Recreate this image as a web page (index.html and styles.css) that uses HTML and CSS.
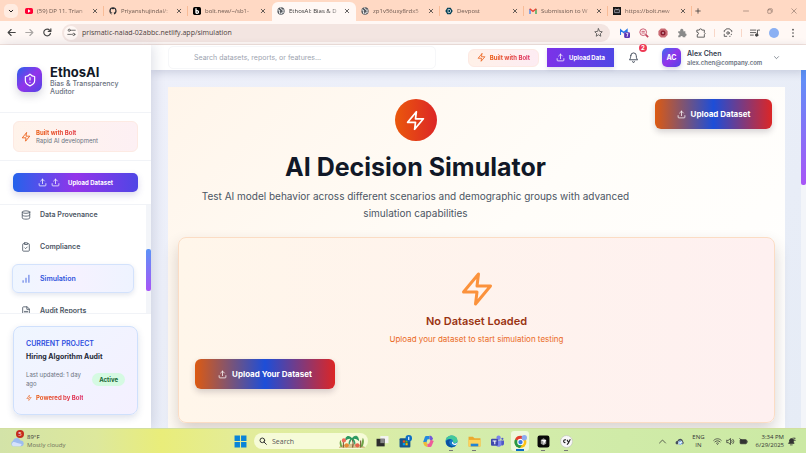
FILE: index.html
```
<!DOCTYPE html>
<html lang="en">

<head>
	<meta charset="UTF-8">
	<meta name="viewport" content="width=device-width, initial-scale=1">
	<title>EthosAI: Bias &amp; Transparency Auditor</title>
	<link rel="stylesheet" href="styles.css">
</head>

<body>
	<!-- shared icons -->
	<svg class="sprite" aria-hidden="true">
		<symbol id="zap" viewBox="0 0 24 24"><path d="M13 2 3 14h9l-1 8 10-12h-9l1-8z"/></symbol>
		<symbol id="upload" viewBox="0 0 24 24"><path d="M21 15v4a2 2 0 0 1-2 2H5a2 2 0 0 1-2-2v-4M17 8l-5-5-5 5M12 3v12"/></symbol>
		<symbol id="close" viewBox="0 0 24 24"><path d="M5 5l14 14M19 5 5 19"/></symbol>
		<symbol id="down" viewBox="0 0 24 24"><path d="m5 9 7 7 7-7"/></symbol>
		<symbol id="globe" viewBox="0 0 24 24"><circle cx="12" cy="12" r="11" fill="#555a60" stroke="none"/><path d="M3 9c5-1 6 2 4 5l2 6M10 3c0 4 5 2 5 5s5 2 6 1M14 20c-1-4 2-6 6-5" stroke="#fff" stroke-width="3"/></symbol>
	</svg>

	<header class="browser">
		<div class="tab-strip">
			<button class="tab-search" aria-label="Search tabs"><svg class="icon"><use href="#down"/></svg></button>
			<div class="tab">
				<svg class="favicon" viewBox="0 0 24 24"><rect y="3" width="24" height="18" rx="5" fill="#f03"/><path d="m9 7 8 5-8 5z" fill="#fff"/></svg>
				<span class="tab-name">(59) DP 11. Trian</span>
				<button class="tab-close" aria-label="Close tab"><svg class="icon"><use href="#close"/></svg></button>
			</div>
			<div class="tab">
				<svg class="favicon" viewBox="0 0 24 24"><path fill="#24292f" d="M12 1a11 11 0 0 0-3.5 21.4c.6.1.8-.2.8-.5v-2c-3 .7-3.7-1.3-3.7-1.3-.5-1.300-1.200-1.600-1.200-1.600-1-.7.1-.7.1-.7 1.100.1 1.700 1.100 1.700 1.100 1 1.700 2.600 1.200 3.200.9.1-.7.4-1.200.7-1.500-2.500-.3-5-1.200-5-5.500 0-1.200.4-2.200 1.100-2.900-.1-.3-.5-1.400.1-2.900 0 0 .9-.3 3 1.100a10 10 0 0 1 5.500 0c2.100-1.400 3-1.100 3-1.100.6 1.500.2 2.600.1 2.900.7.7 1.100 1.700 1.100 2.900 0 4.300-2.500 5.200-5 5.500.4.3.8 1 .8 2v3c0 .3.2.6.8.5A11 11 0 0 0 12 1z"/></svg>
				<span class="tab-name">Priyanshujindal/:</span>
				<button class="tab-close" aria-label="Close tab"><svg class="icon"><use href="#close"/></svg></button>
			</div>
			<div class="tab">
				<svg class="favicon" viewBox="0 0 24 24"><rect width="24" height="24" rx="5" fill="#000"/><path d="M9 4v15M9 13a4 4 0 1 1 0 4" fill="none" stroke="#fff" stroke-width="4"/></svg>
				<span class="tab-name">bolt.new/~/sb1-</span>
				<button class="tab-close" aria-label="Close tab"><svg class="icon"><use href="#close"/></svg></button>
			</div>
			<div class="tab tab-active">
				<svg class="favicon icon"><use href="#globe"/></svg>
				<span class="tab-name">EthosAI: Bias &amp; D</span>
				<button class="tab-close" aria-label="Close tab"><svg class="icon"><use href="#close"/></svg></button>
			</div>
			<div class="tab">
				<svg class="favicon icon"><use href="#globe"/></svg>
				<span class="tab-name">zp1v56uxy8rdx5</span>
				<button class="tab-close" aria-label="Close tab"><svg class="icon"><use href="#close"/></svg></button>
			</div>
			<div class="tab">
				<svg class="favicon" viewBox="0 0 24 24"><path d="M7 2h10l6 10-6 10H7L1 12z" fill="#003e54"/><path d="M9 7h3a5 5 0 0 1 0 10H9z" fill="none" stroke="#fff" stroke-width="2"/></svg>
				<span class="tab-name">Devpost</span>
				<button class="tab-close" aria-label="Close tab"><svg class="icon"><use href="#close"/></svg></button>
			</div>
			<div class="tab">
				<svg class="favicon" viewBox="0 0 24 24" fill="none" stroke-width="4"><path d="M3 21V6" stroke="#4285f4"/><path d="M21 21V6" stroke="#34a853"/><path d="m2 5 10 8 10-8" stroke="#ea4335"/></svg>
				<span class="tab-name">Submission to W</span>
				<button class="tab-close" aria-label="Close tab"><svg class="icon"><use href="#close"/></svg></button>
			</div>
			<div class="tab">
				<svg class="favicon" viewBox="0 0 24 24"><rect width="24" height="24" fill="#161616"/><path d="M5 8h14v9H5zM8 5l3 3M16 5l-3 3M9 12h1M14 12h1" fill="none" stroke="#ccd" stroke-width="2"/></svg>
				<span class="tab-name">https://bolt.new</span>
				<button class="tab-close" aria-label="Close tab"><svg class="icon"><use href="#close"/></svg></button>
			</div>
			<button class="tab-new" aria-label="New tab"><svg class="icon" viewBox="0 0 24 24"><path d="M12 3v18M3 12h18"/></svg></button>
			<div class="window-buttons">
				<button aria-label="Minimize"><svg class="icon" viewBox="0 0 24 24"><path d="M2 12h20"/></svg></button>
				<button aria-label="Restore"><svg class="icon" viewBox="0 0 24 24"><rect x="3" y="7" width="14" height="14" rx="2"/><path d="M8 3h10a3 3 0 0 1 3 3v10"/></svg></button>
				<button aria-label="Close"><svg class="icon" viewBox="0 0 24 24"><path d="M3 3l18 18M21 3 3 21"/></svg></button>
			</div>
		</div>

		<div class="toolbar">
			<div class="nav-buttons">
				<button aria-label="Back"><svg class="icon" viewBox="0 0 24 24"><path d="M22 12H3M11 4l-8 8 8 8"/></svg></button>
				<button aria-label="Forward" class="faded"><svg class="icon" viewBox="0 0 24 24"><path d="M2 12h19M13 4l8 8-8 8"/></svg></button>
				<button aria-label="Reload"><svg class="icon" viewBox="0 0 24 24"><path d="M20 14a9 9 0 1 1-2-8l3 3M21 2v7h-7"/></svg></button>
			</div>
			<div class="omnibox">
				<button class="site-info" aria-label="Site information"><svg class="icon" viewBox="0 0 24 24"><circle cx="6" cy="6" r="3"/><path d="M12 6h10M2 17h10"/><circle cx="18" cy="17" r="3"/></svg></button>
				<input class="address" aria-label="Address" value="prismatic-naiad-02abbc.netlify.app/simulation">
				<button aria-label="Bookmark"><svg class="icon" viewBox="0 0 24 24"><path d="m12 2 3 7 7 1-5 5 1 7-6-4-6 4 1-7-5-5 7-1z"/></svg></button>
			</div>
			<div class="extensions">
				<button aria-label="Mail"><svg class="ext" viewBox="0 0 24 24"><path d="M1 17V4l8 7 8-7v9" fill="none" stroke="#2878e8" stroke-width="3"/><rect x="10" y="10" width="14" height="14" rx="3" fill="#5c35b5"/><path d="M15 13h4l-2 8" fill="none" stroke="#fff" stroke-width="2"/></svg></button>
				<button aria-label="Page search"><svg class="ext" viewBox="0 0 24 24" fill="none" stroke="#c2415b" stroke-width="2"><circle cx="10" cy="10" r="8"/><path d="m16 16 6 6" stroke-width="4"/><path d="M6 8h8M6 12h8"/></svg></button>
				<button aria-label="Blocker"><svg class="ext" viewBox="0 0 24 24"><path d="M7 1h10l6 6v10l-6 6H7l-6-6V7z" fill="#c96a73"/><circle cx="12" cy="12" r="6" fill="#8b1c2f"/><circle cx="12" cy="12" r="2" fill="#fff"/></svg></button>
				<button aria-label="Puzzle"><svg class="ext" viewBox="0 0 24 24"><path d="M3 8h5a4 4 0 1 1 7 0h5v5a3 3 0 1 1 0 6v3h-6a3 3 0 0 0-6 0H3v-4a3 3 0 0 0 0-6z" fill="#8a8a8a"/></svg></button>
				<button aria-label="Extensions"><svg class="ext icon" viewBox="0 0 24 24"><path d="M3 5h5a3 3 0 0 1 6 0h6v6a3 3 0 0 1 0 5v6H3v-6a3 3 0 0 0 0-6z"/></svg></button>
				<span class="divider"></span>
				<button aria-label="Search with Lens"><svg class="ext icon" viewBox="0 0 24 24"><path d="M3 9V6l3-1 2-3h8l2 3 3 1v3M3 15v5h6M16 20h1M20 15v1"/><circle cx="12" cy="12" r="3"/></svg></button>
				<span class="divider"></span>
				<button aria-label="Media"><svg class="ext icon" viewBox="0 0 24 24"><path d="M1 5h13M1 11h13M1 17h7M18 17V5h5"/><circle cx="16" cy="17" r="3" fill="#444"/></svg></button>
				<button class="profile" aria-label="Profile"></button>
				<button aria-label="Menu"><svg class="ext" viewBox="0 0 24 24" fill="#444"><circle cx="12" cy="4" r="2"/><circle cx="12" cy="12" r="2"/><circle cx="12" cy="20" r="2"/></svg></button>
			</div>
		</div>
	</header>

	<div class="app">
		<aside class="sidebar">
			<div class="brand">
				<div class="brand-logo"><svg class="icon" viewBox="0 0 24 24"><path d="M20 13c0 5-3.500 7.500-8 9-4.500-1.500-8-4-8-9V6c3 0 6-1.500 8-4 2 2.500 5 4 8 4zM12 8v4M12 16h.01"/></svg></div>
				<div>
					<div class="brand-name">EthosAI</div>
					<div class="brand-sub">Bias &amp; Transparency Auditor</div>
				</div>
			</div>

			<div class="side-section">
				<div class="bolt-card">
					<svg class="icon"><use href="#zap"/></svg>
					<div>
						<div class="warm-text">Built with Bolt</div>
						<div class="bolt-sub">Rapid AI development</div>
					</div>
				</div>
			</div>

			<div class="side-section side-upload">
				<button class="upload-side">
					<svg class="icon"><use href="#upload"/></svg>
					<svg class="icon"><use href="#upload"/></svg>
					<span>Upload Dataset</span>
				</button>
			</div>

			<nav class="side-nav">
				<div class="nav-list">
					<a href="#"><svg class="icon" viewBox="0 0 24 24"><ellipse cx="12" cy="5" rx="9" ry="3"/><path d="M3 5v14c0 4 18 4 18 0V5M3 12c0 4 18 4 18 0"/></svg>Data Provenance</a>
					<a href="#"><svg class="icon" viewBox="0 0 24 24"><rect x="8" y="2" width="8" height="4" rx="1"/><path d="M16 4h2a2 2 0 0 1 2 2v14a2 2 0 0 1-2 2H6a2 2 0 0 1-2-2V6a2 2 0 0 1 2-2h2M9 14l2 2 4-4"/></svg>Compliance</a>
					<a href="#" class="current"><svg class="icon" viewBox="0 0 24 24"><path d="M12 20V10M19 20V3M5 20v-4"/></svg>Simulation</a>
					<a href="#"><svg class="icon" viewBox="0 0 24 24"><path d="M14 2H6a2 2 0 0 0-2 2v16a2 2 0 0 0 2 2h12a2 2 0 0 0 2-2V8zM14 2v6h6M8 13h8M8 17h8"/></svg>Audit Reports</a>
				</div>
				<div class="nav-scroll"><div class="nav-thumb"></div></div>
			</nav>

			<div class="side-bottom">
				<div class="project">
					<div class="project-label">CURRENT PROJECT</div>
					<div class="project-name">Hiring Algorithm Audit</div>
					<div class="project-row">
						<span>Last updated: 1 day ago</span>
						<span class="status">Active</span>
					</div>
					<div class="powered"><svg class="icon"><use href="#zap"/></svg><span class="warm-text">Powered by Bolt</span></div>
				</div>
			</div>
		</aside>

		<div class="main">
			<div class="topbar">
				<input class="search" type="text" aria-label="Search" placeholder="Search datasets, reports, or features...">
				<div class="topbar-right">
					<a href="#" class="bolt-pill"><svg class="icon"><use href="#zap"/></svg><span class="warm-text">Built with Bolt</span></a>
					<button class="upload-data"><svg class="icon"><use href="#upload"/></svg>Upload Data</button>
					<button class="bell" aria-label="Notifications">
						<svg class="icon" viewBox="0 0 24 24"><path d="M6 8a6 6 0 0 1 12 0c0 7 3 9 3 9H3s3-2 3-9M10 21a2 2 0 0 0 4 0"/></svg>
						<span class="badge">2</span>
					</button>
					<button class="user">
						<span class="avatar">AC</span>
						<span class="user-text"><span class="user-name">Alex Chen</span><span class="user-mail">alex.chen@company.com</span></span>
						<svg class="icon"><use href="#down"/></svg>
					</button>
				</div>
			</div>

			<div class="content">
				<main class="panel">
					<div class="hero">
						<div class="hero-text">
							<div class="hero-icon"><svg class="icon"><use href="#zap"/></svg></div>
							<h1>AI Decision Simulator</h1>
							<p>Test AI model behavior across different scenarios and demographic groups with advanced simulation capabilities</p>
						</div>
						<button class="rainbow-button"><svg class="icon"><use href="#upload"/></svg>Upload Dataset</button>
					</div>
					<section class="empty">
						<svg class="icon"><use href="#zap"/></svg>
						<h2>No Dataset Loaded</h2>
						<p>Upload your dataset to start simulation testing</p>
						<button class="rainbow-button wide"><svg class="icon"><use href="#upload"/></svg>Upload Your Dataset</button>
					</section>
				</main>
				<div class="page-scroll"><div class="page-thumb"></div></div>
			</div>
		</div>
	</div>

	<footer class="taskbar">
		<div class="weather">
			<div class="weather-icon">
				<svg viewBox="0 0 24 24"><path d="M5 21a5 5 0 0 1 0-9 7 7 0 0 1 13-1 5 5 0 0 1 1 10z" fill="#9dbcf0"/><path d="M5 21a5 5 0 0 1 0-7c4-1 8 3 15 3a5 5 0 0 1-3 4z" fill="#d5e2fb"/></svg>
				<span class="weather-badge">5</span>
			</div>
			<div>89°F<br><span class="dim">Mostly cloudy</span></div>
		</div>
		<div class="dock">
			<button aria-label="Start"><svg viewBox="0 0 24 24" fill="#0a84d8"><path d="M1 1h10v10H1zM13 1h10v10H13zM1 13h10v10H1zM13 13h10v10H13z"/></svg></button>
			<label class="task-search">
				<svg class="icon" viewBox="0 0 24 24"><circle cx="10" cy="10" r="7"/><path d="m15 15 7 7"/></svg>
				<input type="text" placeholder="Search" aria-label="Search Windows">
				<svg class="palms" viewBox="0 0 48 26"><path d="M0 24c10-8 36-8 48 0v2H0z" fill="#d7c28b"/><path d="M25 25c2-6 1-12-1-17M8 25V12M40 25V12" stroke="#7a5a3a" stroke-width="2" fill="none"/><path d="M24 9C18 1 13 5 12 11c4-4 8-4 12-2 4-2 8-2 12 2-1-7-6-10-12-2zM24 9c-5 2-6 7-5 10M24 9c5 2 6 7 5 10" fill="#2c9a62" stroke="#2c9a62" stroke-width="2"/><path d="M3 24c-3-7-2-10 0-13l3 13zM43 24c4-6 4-14 1-17l-4 17z" fill="#6fa447"/><circle cx="9" cy="12" r="4" fill="#ec6b5c"/><circle cx="14" cy="21" r="4" fill="#e58b35"/><circle cx="34" cy="21" r="4" fill="#e5654c"/></svg>
			</label>
			<button aria-label="Task view"><svg viewBox="0 0 24 24"><rect x="8" y="2" width="15" height="13" fill="#f3f3f3"/><rect x="1" y="7" width="15" height="14" fill="#2d2d2d"/><path d="M8 7h8v8H8z" fill="#888"/></svg></button>
			<button aria-label="Store"><svg viewBox="0 0 24 24"><rect x="1" y="6" width="20" height="17" rx="2" fill="#14568d"/><path d="M7 10h4v4H7z" fill="#f25022"/><path d="M12 10h4v4h-4z" fill="#7fba00"/><path d="M7 15h4v4H7z" fill="#00a4ef"/><path d="M12 15h4v4h-4z" fill="#ffb900"/><circle cx="18" cy="6" r="6" fill="#0b6cc4"/><path d="M18 3v6" stroke="#fff" stroke-width="2"/></svg></button>
			<button aria-label="Copilot"><svg viewBox="0 0 24 24" fill="none" stroke-width="6" stroke-linejoin="round"><path d="M14 5H8L5 14" stroke="#2289df"/><path d="M14 4c3 0 3 4 5 5" stroke="#7058d8"/><path d="M5 13c1 5 2 6 5 6" stroke="#edba38"/><path d="M10 19h5l4-9" stroke="#ee5b9a"/></svg></button>
			<button aria-label="Edge" class="open"><svg viewBox="0 0 24 24"><circle cx="12" cy="12" r="11" fill="#1479c9"/><path d="M1 11C3-2 22-2 23 10c0 6-9 6-8 2 0-6-10-6-14-1z" fill="#42c99a"/><path d="M8 12c-1 8 6 10 12 8-8 6-19 1-18-8 2-4 8-5 10-3-2 0-4 1-4 3z" fill="#0c4f9e"/><path d="M15 12c-1 5 5 5 8 2l-2 4c-7 2-11-4-6-6z" fill="#fff"/></svg></button>
			<button aria-label="Explorer" class="open"><svg viewBox="0 0 24 24"><path d="M1 3h8l3 3h11v15H1z" fill="#eba92e"/><path d="M1 9h22v12H1z" fill="#ffd45c"/><path d="M5 16h14v5H5z" fill="#2585d3"/></svg></button>
			<button aria-label="Teams"><svg viewBox="0 0 24 24"><circle cx="14" cy="5" r="4" fill="#7b83eb"/><circle cx="21" cy="7" r="2" fill="#5059c9"/><path d="M9 10h11v7a6 6 0 0 1-11 2z" fill="#7b83eb"/><path d="M19 10h5v6c0 3-3 4-5 3z" fill="#5059c9"/><rect y="7" width="13" height="13" rx="2" fill="#4048ae"/><path d="M3 11h7M7 11v6" stroke="#fff" stroke-width="2"/></svg></button>
			<button aria-label="Chrome" class="open active"><svg viewBox="0 0 24 24"><circle cx="12" cy="13" r="11" fill="#fbc116"/><path d="M12 13 2 8A11 11 0 0 1 22 8z" fill="#e33b2e"/><path d="m12 13-10-5a11 11 0 0 0 9 16l5-8z" fill="#279847"/><circle cx="12" cy="13" r="6" fill="#fff"/><circle cx="12" cy="13" r="4" fill="#3b78e7"/><circle cx="19" cy="5" r="5" fill="#8daaf0"/></svg></button>
			<button aria-label="Cursor" class="open"><svg viewBox="0 0 24 24"><rect x="1" y="1" width="22" height="22" rx="4" fill="#080808"/><path d="m12 6 5 3v7l-5 3-5-3V9z" fill="#999"/><path d="m7 9 10 0-5 9v-6z" fill="#fff"/></svg></button>
			<button aria-label="Editor" class="open"><svg viewBox="0 0 24 24"><circle cx="12" cy="12" r="11" fill="#f8f8f8" stroke="#bbb"/><path d="M11 9c-5-2-6 6-1 5M13 9l3 5 3-6M16 14l-3 4" fill="none" stroke="#222" stroke-width="2"/></svg></button>
		</div>
		<div class="tray">
			<svg class="icon" viewBox="0 0 24 24"><path d="m4 16 8-8 8 8"/></svg>
			<svg viewBox="0 0 24 24"><path d="M3 19c-4-5 1-9 4-9 2-8 14-7 14 1 3 2 3 6 0 8z" fill="#46505c"/><circle cx="14" cy="15" r="6" fill="#eef6ff"/><path d="M10 15a4 4 0 0 1 7-2M18 16a4 4 0 0 1-7 2" fill="none" stroke="#227ed1" stroke-width="2"/></svg>
			<div class="lang">ENG<br>IN</div>
			<div class="tray-group">
				<svg class="icon" viewBox="0 0 24 24"><path d="M2 9c6-6 14-6 20 0M5 13c4-4 10-4 14 0M9 17c2-2 4-2 6 0M12 20h.01"/></svg>
				<svg class="icon" viewBox="0 0 24 24"><path d="M2 9v6h4l6 5V4L6 9zM15 9c2 2 2 4 0 6M18 6c4 4 4 8 0 12"/></svg>
				<svg class="icon" viewBox="0 0 24 24"><rect x="3" y="7" width="17" height="11" rx="2" fill="#333"/><path d="M22 11v3M2 4l5 5"/></svg>
			</div>
			<div class="clock">3:34 PM<br>6/29/2025</div>
			<svg class="icon" viewBox="0 0 24 24"><path d="M7 9a5 5 0 0 1 10 0c0 6 2 8 2 8H4s3-2 3-8M9 21h5" fill="#333"/><path d="M16 3h6l-6 6h6"/></svg>
		</div>
	</footer>
</body>

</html>
```
FILE: styles.css
```
* {
	box-sizing: border-box;
}

body {
	margin: 0;
	height: 100vh;
	display: flex;
	flex-direction: column;
	overflow: hidden;
	font-family: Inter, "Liberation Sans", sans-serif;
	font-size: 7px;
	color: #374151;
}

button {
	display: flex;
	align-items: center;
	justify-content: center;
	padding: 0;
	border: none;
	background: none;
	font: inherit;
	color: inherit;
	cursor: pointer;
}

input {
	min-width: 0;
	padding: 0;
	border: none;
	outline: none;
	background: none;
	font: inherit;
	color: inherit;
}

a {
	color: inherit;
	text-decoration: none;
}

h1, h2, p {
	margin: 0;
}

svg {
	flex: none;
}

.sprite {
	position: absolute;
	width: 0;
	height: 0;
}

.icon {
	width: 10px;
	height: 10px;
	fill: none;
	stroke: currentColor;
	stroke-width: 2;
	stroke-linecap: round;
	stroke-linejoin: round;
}

/* browser frame */
.browser, .taskbar {
	font-family: "Open Sans", "Noto Sans", sans-serif;
}

.tab-strip {
	display: flex;
	align-items: center;
	height: 21px;
	padding-left: 4px;
	background: #ffd9c4;
	color: #6b574e;
}

.tab-search {
	width: 14px;
	height: 14px;
	margin-right: 2px;
	border-radius: 5px;
	background: #ffece1;
	color: #222;
}

.tab-search .icon {
	width: 6px;
	height: 6px;
	stroke-width: 4;
}

.tab {
	display: flex;
	align-items: center;
	flex: 0 1 84px;
	min-width: 0;
	height: 18px;
	gap: 4px;
	padding: 0 6px 0 5px;
	background: linear-gradient(#f9bc97, #f9bc97) right center / 1px 10px no-repeat;
}

.tab-active, .tab:has(+ .tab-active) {
	background: none;
}

.tab-active {
	height: 21px;
	padding-bottom: 3px;
	margin-top: 3px;
	border-radius: 6px 6px 0 0;
	background: #fff8f5;
	color: #333;
}

.favicon {
	width: 8px;
	height: 8px;
}

.tab-name {
	flex: 1;
	min-width: 0;
	font-size: 6px;
	white-space: nowrap;
	mask-image: linear-gradient(to right, #000 75%, rgba(0, 0, 0, .3));
}

.tab-close .icon {
	width: 6px;
	height: 6px;
	stroke: #333;
	stroke-width: 3;
}

.tab-new {
	margin-left: 3px;
}

.tab-new .icon {
	width: 6px;
	height: 6px;
	stroke: #333;
	stroke-width: 3;
}

.window-buttons {
	display: flex;
	gap: 18px;
	margin-left: auto;
	padding-right: 9px;
}

.window-buttons .icon {
	width: 6px;
	height: 6px;
}

.toolbar {
	display: flex;
	align-items: center;
	height: 24px;
	padding: 0 8px 0 7px;
	background: #fff8f5;
	border-bottom: 1px solid #f3e3dd;
	color: #444;
}

.nav-buttons {
	display: flex;
	gap: 9px;
	margin-right: 10px;
}

.nav-buttons .icon {
	width: 9px;
	height: 9px;
	stroke-width: 3;
}

.faded {
	opacity: .45;
}

.omnibox {
	display: flex;
	align-items: center;
	flex: 1;
	height: 18px;
	gap: 4px;
	padding: 0 7px 0 2px;
	border-radius: 9px;
	background: #f3e5e1;
}

.omnibox .icon {
	width: 9px;
	height: 9px;
}

.site-info {
	width: 14px;
	height: 14px;
	border-radius: 50%;
	background: #fff8f5;
}

.address {
	flex: 1;
	color: #4c4240;
}

.extensions {
	display: flex;
	align-items: center;
	gap: 9px;
	margin-left: 10px;
}

.ext {
	width: 10px;
	height: 10px;
}

.extensions .divider {
	margin: 0 -1px;
}

.divider {
	width: 1px;
	height: 8px;
	background: #f8d7c8;
}

.profile {
	width: 10px;
	height: 10px;
	border-radius: 50%;
	background: #8bb0f3;
}

/* app */
.app {
	display: flex;
	flex: 1;
	min-height: 0;
}

.sidebar {
	display: flex;
	flex-direction: column;
	width: 151px;
	flex: none;
	background: #fff;
	box-shadow: 2px 0 12px rgba(30, 41, 90, .15);
	z-index: 2;
}

.brand {
	display: flex;
	align-items: center;
	gap: 8px;
	height: 68px;
	padding: 2px 17px 0;
	border-bottom: 1px solid #f1f3f7;
}

.brand-logo {
	display: flex;
	align-items: center;
	justify-content: center;
	flex: none;
	width: 25px;
	height: 25px;
	border-radius: 7px;
	background: linear-gradient(135deg, #2563eb, #9333ea 50%, #4f46e5);
	box-shadow: 0 4px 8px rgba(60, 60, 100, .2);
	color: #fff;
}

.brand-logo .icon {
	width: 14px;
	height: 14px;
}

.brand-name {
	font-size: 13px;
	line-height: 16px;
	font-weight: 700;
	color: #111827;
}

.brand-sub {
	line-height: 8px;
	font-weight: 500;
	color: #6b7280;
}

.side-section {
	padding: 8px 13px;
	border-bottom: 1px solid #f1f3f7;
}

.bolt-card {
	display: flex;
	align-items: center;
	gap: 5px;
	height: 31px;
	padding: 0 7px;
	border: 1px solid #fdeae3;
	border-radius: 6px;
	background: linear-gradient(to right, #fff3ea, #fdf0f4);
	color: #ea580c;
	font-size: 6px;
	line-height: 8px;
}

.warm-text {
	background: linear-gradient(to right, #ea580c, #dc2660);
	background-clip: text;
	color: transparent;
	font-weight: 700;
}

.bolt-sub {
	color: #6b7280;
}

.side-upload {
	padding: 12px 13px;
}

.upload-side {
	gap: 4px;
	width: 100%;
	height: 19px;
	border-radius: 5px;
	background: linear-gradient(to right, #2563eb, #9333ea 50%, #4f46e5);
	box-shadow: 0 3px 7px rgba(70, 60, 160, .2);
	color: #fff;
	font-size: 6px;
	font-weight: 700;
}

.upload-side .icon {
	width: 9px;
	height: 9px;
}

.upload-side span {
	margin-left: 4px;
}

.side-nav {
	display: flex;
	flex: 1;
	min-height: 0;
	overflow: hidden;
}

.nav-list {
	display: flex;
	flex-direction: column;
	flex: 1;
	gap: 3px;
	margin-top: -5px;
	padding: 0 12px;
}

.nav-list a {
	display: flex;
	align-items: center;
	flex: none;
	gap: 9px;
	height: 29px;
	padding: 0 8px;
	border: 1px solid transparent;
	border-radius: 6px;
	color: #4b5563;
	font-weight: 600;
}

.nav-list a.current {
	border-color: #d3e2fc;
	background: linear-gradient(to right, #eff6ff, #f6f2ff, #eef3ff);
	box-shadow: 0 2px 5px rgba(40, 60, 120, .13);
	color: #2f53dc;
}

.nav-scroll {
	width: 5px;
	padding-top: 44px;
	background: #f3f5f9;
}

.nav-thumb {
	height: 42px;
	border-radius: 2px;
	background: linear-gradient(#5b93f7, #a855f7);
}

.side-bottom {
	padding: 12px 13px 13px;
	border-top: 1px solid #f1f3f7;
}

.project {
	padding: 12px 12px;
	border: 1px solid #cfe0fc;
	border-radius: 8px;
	background: linear-gradient(135deg, #eff6ff, #f4f0ff);
	box-shadow: 0 3px 7px rgba(40, 60, 120, .15);
	font-size: 6px;
	line-height: 9px;
	color: #6b7280;
}

.project-label {
	font-size: 7px;
	font-weight: 600;
	color: #2f4fe0;
}

.project-name {
	margin: 4px 0 8px;
	font-size: 7px;
	line-height: 10px;
	font-weight: 700;
	color: #1f2937;
}

.project-row {
	display: flex;
	align-items: center;
	justify-content: space-between;
	gap: 6px;
}

.status {
	padding: 2px 7px;
	border-radius: 7px;
	background: #d5fae2;
	color: #166534;
	font-weight: 700;
}

.powered {
	display: flex;
	align-items: center;
	gap: 4px;
	margin-top: 5px;
	color: #ea580c;
}

.powered .icon {
	width: 6px;
	height: 6px;
}

.main {
	display: flex;
	flex-direction: column;
	flex: 1;
	min-width: 0;
}

.topbar {
	display: flex;
	align-items: center;
	justify-content: space-between;
	height: 25px;
	flex: none;
	padding: 0 26px 0 17px;
	background: #fff;
	box-shadow: 0 2px 10px rgba(30, 41, 90, .18);
	z-index: 1;
}

.search {
	flex: 0 1 268px;
	height: 23px;
	padding-left: 25px;
	border: 1px solid #f6f7f9;
	border-radius: 5px;
}

.search::placeholder {
	color: #9ca3af;
}

.topbar-right {
	display: flex;
	align-items: center;
}

.bolt-pill {
	display: flex;
	align-items: center;
	gap: 4px;
	height: 18px;
	padding: 0 8px;
	border: 1px solid #fde9e3;
	border-radius: 6px;
	background: linear-gradient(to right, #fff1e8, #fdecf3);
	color: #ea580c;
	font-size: 6px;
}

.bolt-pill .icon, .upload-data .icon {
	width: 9px;
	height: 9px;
}

.upload-data {
	gap: 4px;
	width: 67px;
	height: 19px;
	margin-left: 8px;
	background: linear-gradient(to right, #7c32e8, #4f46e5);
	box-shadow: 0 2px 4px rgba(60, 60, 120, .15);
	color: #fff;
	font-weight: 700;
	font-size: 6px;
}

.bell {
	position: relative;
	margin: 0 23px 0 14px;
}

.bell .icon {
	width: 11px;
	height: 11px;
}

.badge {
	position: absolute;
	top: -8px;
	left: 11px;
	width: 8px;
	height: 8px;
	border-radius: 50%;
	background: #ee3a55;
	color: #fff;
	font-size: 6px;
	line-height: 8px;
	font-weight: 700;
}

.user {
	gap: 6px;
	text-align: left;
}

.user .icon {
	width: 7px;
	height: 7px;
}

.avatar {
	width: 19px;
	height: 19px;
	border-radius: 5px;
	background: linear-gradient(135deg, #3b6cf0, #9333ea 50%, #4f46e5);
	box-shadow: 0 2px 4px rgba(60, 60, 120, .2);
	color: #fff;
	font-weight: 700;
	line-height: 19px;
	text-align: center;
}

.user-text {
	display: flex;
	flex-direction: column;
	min-width: 80px;
	line-height: 9px;
}

.user-name {
	font-weight: 600;
}

.user-mail {
	font-size: 6px;
	font-weight: 600;
	color: #6b7280;
}

.content {
	display: flex;
	flex: 1;
	min-height: 0;
	padding: 0 0 0 17px;
	background: linear-gradient(135deg, #eef0fa, #e6ecf6);
}

.panel {
	flex: 1;
	min-width: 0;
	margin-top: 17px;
	padding: 12px 10px;
	background: linear-gradient(135deg, #fff5ea, #fffdf9 50%, #fff);
}

.hero {
	display: flex;
	align-items: flex-start;
	gap: 5px;
	padding: 0 3px;
}

.hero-text {
	flex: 1;
	text-align: center;
}

.hero-icon {
	display: flex;
	align-items: center;
	justify-content: center;
	width: 42px;
	height: 42px;
	margin: 0 auto;
	border-radius: 50%;
	background: linear-gradient(to right, #ea580c, #dc2626);
	color: #fff;
}

.hero-icon .icon {
	width: 21px;
	height: 21px;
}

.hero h1 {
	margin: 9px 0 4px;
	font-size: 25px;
	line-height: 34px;
	font-weight: 700;
	color: #111827;
}

.hero p {
	font-size: 10px;
	line-height: 17px;
	color: #4b5563;
}

.rainbow-button {
	gap: 5px;
	width: 117px;
	height: 30px;
	flex: none;
	border-radius: 6px;
	background: linear-gradient(to right, #dc5a12, #1d4ed8 50%, #dc2626);
	box-shadow: 0 3px 6px rgba(50, 40, 60, .2);
	color: #fff;
	font-size: 8px;
	font-weight: 700;
}

.rainbow-button .icon {
	width: 9px;
	height: 9px;
}

.rainbow-button.wide {
	width: 140px;
}

.empty {
	display: flex;
	flex-direction: column;
	align-items: center;
	margin-top: 15px;
	padding: 33px 16px;
	border: 1px solid #fbdcc4;
	border-radius: 8px;
	background: linear-gradient(to right, #fff6ea, #fef0f0);
	box-shadow: 0 8px 16px rgba(60, 40, 30, .2);
}

.empty > .icon {
	width: 36px;
	height: 36px;
	stroke: #fb923c;
}

.empty h2 {
	margin: 7px 0 4px;
	font-size: 11px;
	line-height: 15px;
	font-weight: 600;
	color: #9a3412;
}

.empty p {
	font-size: 8px;
	line-height: 13px;
	color: #ea6a25;
}

.empty .rainbow-button {
	align-self: flex-start;
	margin-top: 13px;
}

.page-scroll {
	width: 5px;
	margin-left: 16px;
	background: #f3f5f9;
}

.page-thumb {
	height: 115px;
	border-radius: 0 0 2px 2px;
	background: linear-gradient(#5b93f7, #a855f7);
}

/* windows taskbar */
.taskbar {
	display: grid;
	grid-template-columns: 1fr auto 1fr;
	align-items: center;
	height: 25px;
	flex: none;
	border-top: 1px solid #d2dfa0;
	background: linear-gradient(to right, #d3e3a8, #dde89c 12%, #e9ed7a 20%, #e3ec9a 30%, #d5edac 55%, #cbe9a4);
	color: #333;
	z-index: 3;
}

.taskbar svg {
	width: 14px;
	height: 14px;
}

.weather {
	display: flex;
	align-items: center;
	gap: 3px;
	padding-left: 10px;
	font-size: 6px;
	line-height: 8px;
}

.weather-icon {
	position: relative;
	height: 14px;
}

.weather-badge {
	position: absolute;
	top: -4px;
	right: 0;
	width: 8px;
	height: 8px;
	border-radius: 50%;
	background: #c42b1c;
	color: #fff;
	line-height: 8px;
	text-align: center;
}

.dim {
	color: #6b705a;
}

.dock {
	display: flex;
	align-items: center;
	gap: 5px;
}

.dock button {
	width: 18px;
	height: 20px;
	border-radius: 3px;
}

.dock button svg {
	width: 13px;
	height: 13px;
}

.dock .open {
	background: linear-gradient(#777, #777) center bottom / 4px 1px no-repeat;
}

.dock .active {
	background: linear-gradient(#0a6cc4, #0a6cc4) center bottom / 8px 2px no-repeat, #eef8dc;
}

.task-search {
	display: flex;
	align-items: center;
	gap: 5px;
	width: 114px;
	height: 16px;
	padding: 0 3px 0 5px;
	border-radius: 8px;
	background: #f6fbd8;
}

.task-search .icon {
	width: 8px;
	height: 8px;
	stroke-width: 3;
}

.task-search input {
	flex: 1;
}

.task-search input::placeholder {
	color: #555;
}

.task-search .palms {
	width: 26px;
}

.tray {
	display: flex;
	align-items: center;
	justify-content: flex-end;
	gap: 8px;
	padding-right: 10px;
	font-size: 6px;
	line-height: 8px;
}

.taskbar .tray svg {
	width: 9px;
	height: 9px;
}

.tray-group {
	display: flex;
	gap: 4px;
}

.lang {
	text-align: center;
}

.clock {
	text-align: right;
}

.tray > .icon:last-child {
	margin-left: -5px;
}
```
